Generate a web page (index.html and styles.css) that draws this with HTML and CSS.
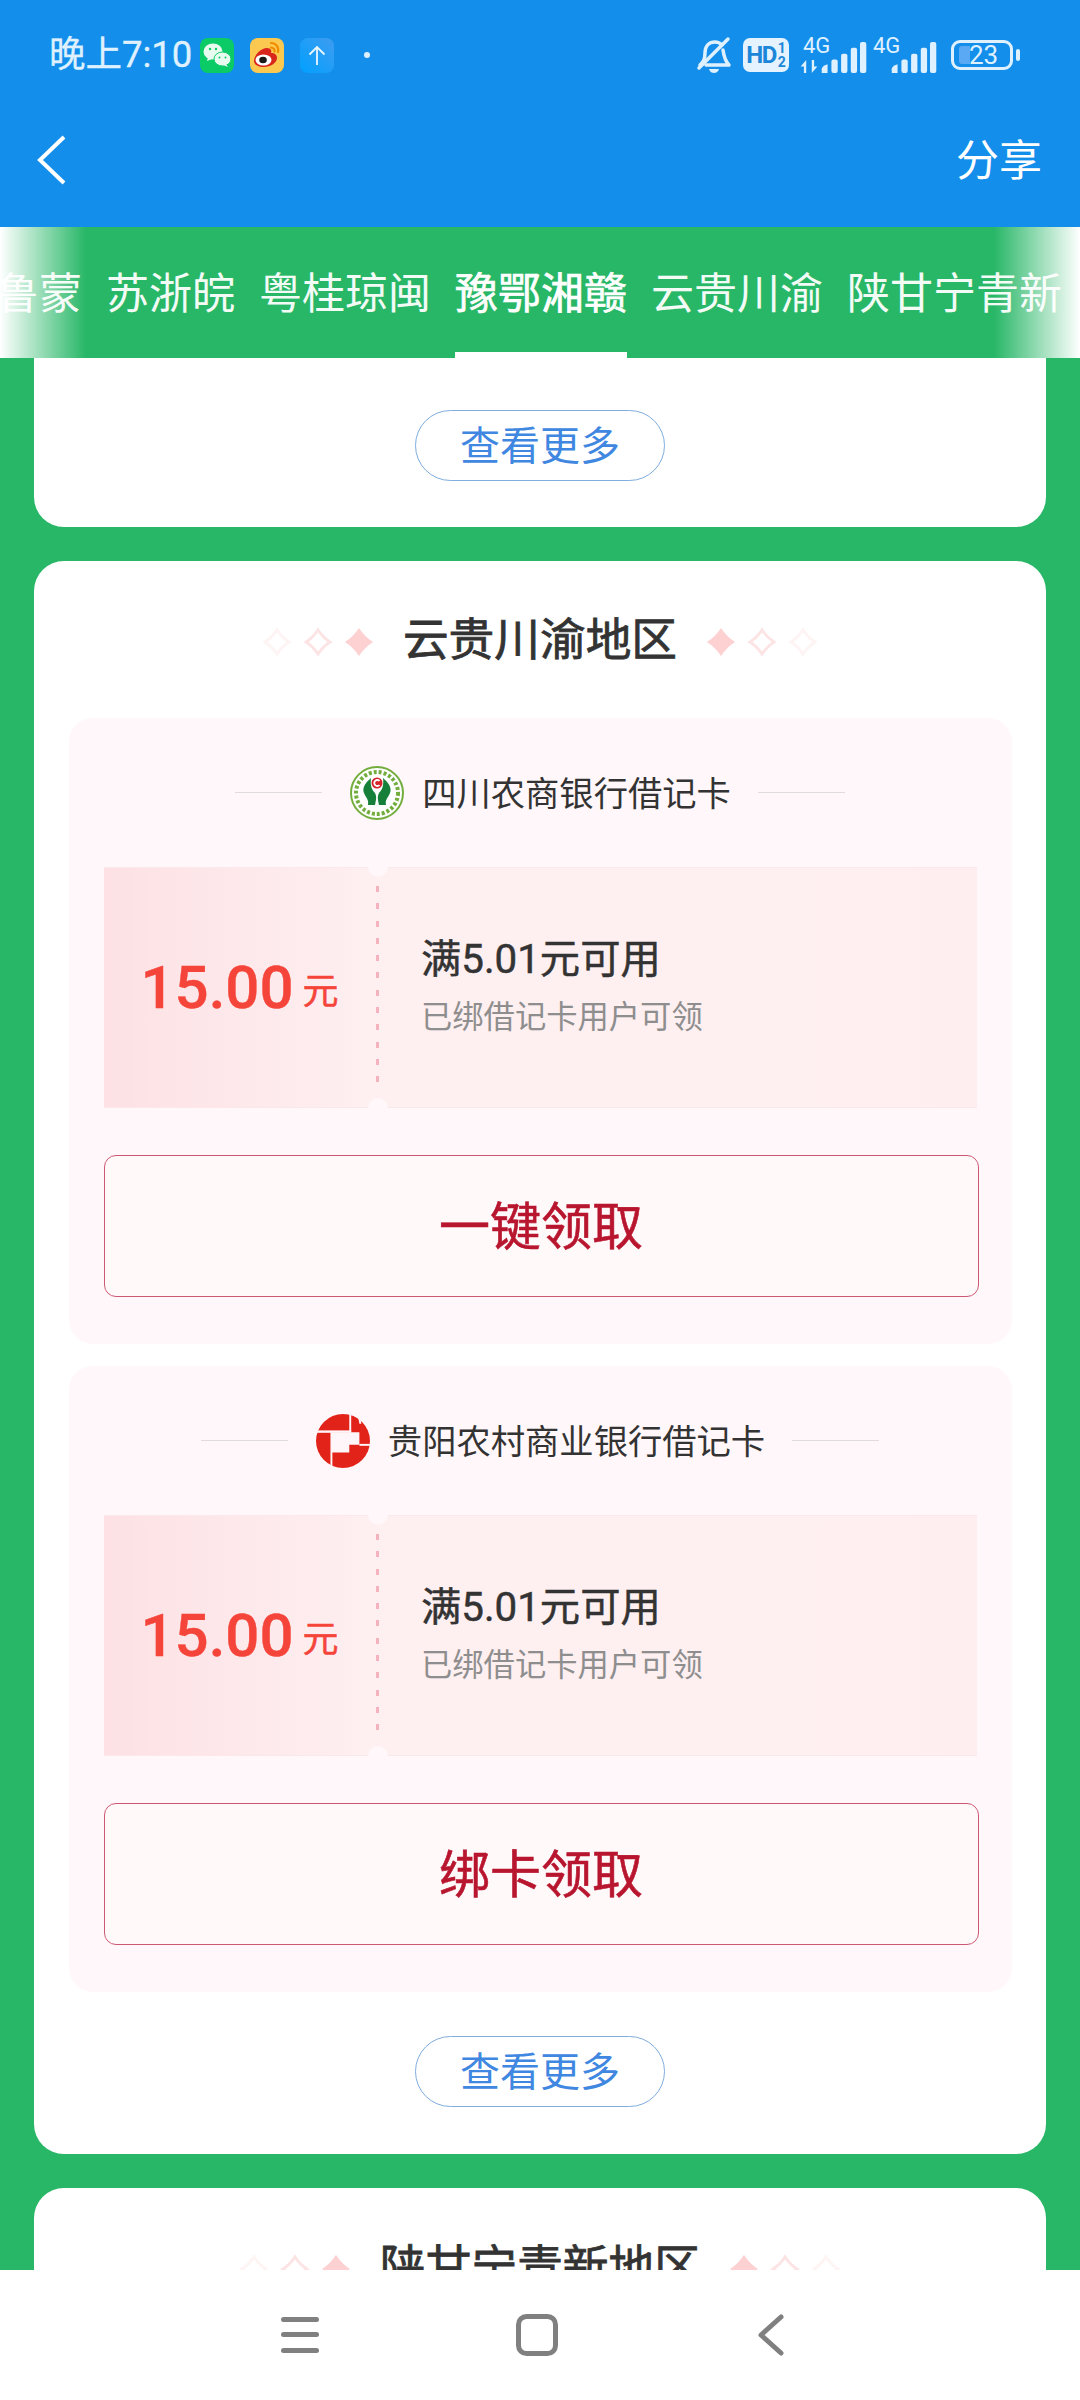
FILE: index.html
```html
<!DOCTYPE html>
<html lang="zh-CN">
<head>
<meta charset="utf-8">
<title>云贵川渝地区</title>
<link rel="stylesheet" href="styles.css">
</head>
<body>
<div class="app">
  <header class="top">
    <div class="status">
      <div class="status-left">
        <span class="time">晚上7:10</span>
        <svg class="app-icon" viewBox="0 0 34 35"><rect width="34" height="35" rx="8" fill="#0bcb66"/><ellipse cx="13" cy="13.500" rx="9.500" ry="8" fill="#e8fbef"/><path d="M8 19l-1 4 5-2z" fill="#e8fbef"/><ellipse cx="22.500" cy="21" rx="8.500" ry="7" fill="#e8fbef" stroke="#0bcb66"/><path d="M26 26l2 3-5-2z" fill="#e8fbef"/><circle cx="10" cy="11" r="1.200" fill="#0bcb66"/><circle cx="16" cy="11" r="1.200" fill="#0bcb66"/><circle cx="19.500" cy="19.500" r="1" fill="#0bcb66"/><circle cx="25.500" cy="19.500" r="1" fill="#0bcb66"/></svg>
        <svg class="app-icon" viewBox="0 0 34 35"><rect width="34" height="35" rx="8" fill="#fbc94f"/><path d="M4 23c0-6 7-13 13-13 4 0 5 3 4 5 4 0 6 2 6 5 0 5-7 9-13 9-5 0-10-2-10-6z" fill="#d9261c"/><ellipse cx="13.500" cy="22" rx="8" ry="5.500" fill="#fff"/><ellipse cx="13" cy="22" rx="3.800" ry="3.200" fill="#1a1a1a"/><path d="M21 5c5 0 8 4 7 9M21 9.500c2.500 0 4 2 3.500 4" fill="none" stroke="#f08c00" stroke-width="2.200" stroke-linecap="round"/></svg>
        <svg class="app-icon" viewBox="0 0 34 35"><defs><linearGradient id="up" x1="0" y1="1" x2="1" y2="0"><stop offset="0" stop-color="#00a0ff"/><stop offset="1" stop-color="#3f9cf0"/></linearGradient></defs><rect width="34" height="35" rx="8" fill="url(#up)"/><path d="M17 27V9M9.500 16.500L17 9l7.500 7.500" fill="none" stroke="#eaf7ff" stroke-width="1.800"/></svg>
        <span class="status-dot"></span>
      </div>
      <div class="status-right">
        <svg class="bell" viewBox="0 0 36 38"><path d="M4 29c3-3 5-5 5-12 0-7 4-11 10-11 3 0 5 1 7 3M27 14c1 7 2 11 6 15H10" fill="none" stroke="#dff1ff" stroke-width="3.500" stroke-linecap="round" stroke-linejoin="round"/><path d="M3 32L32 3" stroke="#dff1ff" stroke-width="3.500" stroke-linecap="round"/><path d="M13 33h10c-1 3-3 4-5 4s-4-1-5-4z" fill="#dff1ff"/></svg>
        <span class="hd"><span class="hd-main">HD</span><span class="hd-sub"><span>1</span><span>2</span></span></span>
        <span class="signal">
          <span class="net">4G</span>
          <svg class="arrows" viewBox="0 0 18 14"><path d="M6 0v14h-2.500V7H0zM12 14V0h2.500v7H18z" fill="#dff1ff"/></svg>
          <svg class="bars" viewBox="0 0 46 32"><g fill="#dff1ff"><path d="M0 32v-4q0-3 6-5v9z"/><rect x="10" y="18" width="6.500" height="14" rx="2"/><rect x="20" y="12" width="6.500" height="20" rx="2"/><rect x="30" y="6" width="6.500" height="26" rx="2"/><rect x="39.500" y="0" width="6.500" height="32" rx="2"/></g></svg>
        </span>
        <span class="signal signal-two">
          <span class="net">4G</span>
          <svg class="bars" viewBox="0 0 46 32"><g fill="#dff1ff"><path d="M0 32v-4q0-3 6-5v9z"/><rect x="10" y="18" width="6.500" height="14" rx="2"/><rect x="20" y="12" width="6.500" height="20" rx="2"/><rect x="30" y="6" width="6.500" height="26" rx="2"/><rect x="39.500" y="0" width="6.500" height="32" rx="2"/></g></svg>
        </span>
        <span class="battery"><span class="battery-body"><span class="battery-fill"></span><span class="battery-num">23</span></span><span class="battery-tip"></span></span>
      </div>
    </div>
    <nav class="navbar">
      <svg class="back" viewBox="0 0 30 50"><path d="M27 2L3 25l24 23" fill="none" stroke="#fff" stroke-width="4"/></svg>
      <span class="share">分享</span>
    </nav>
  </header>

  <div class="tabs">
    <div class="tab-row">
      <span class="tab">鲁蒙</span>
      <span class="tab">苏浙皖</span>
      <span class="tab">粤桂琼闽</span>
      <span class="tab tab-active">豫鄂湘赣</span>
      <span class="tab">云贵川渝</span>
      <span class="tab">陕甘宁青新</span>
    </div>
    <span class="fade fade-left"></span>
    <span class="fade fade-right"></span>
  </div>

  <main class="scroll">
    <section class="region region-cut">
      <button class="more">查看更多</button>
    </section>

    <section class="region region-full">
      <h2 class="region-title">
        <svg class="stars" viewBox="0 0 110 30"><use href="#star-line" x="0" opacity=".4"/><use href="#star-line" x="41"/><use href="#star-solid" x="82"/></svg>
        <span>云贵川渝地区</span>
        <svg class="stars" viewBox="0 0 110 30"><use href="#star-solid" x="0"/><use href="#star-line" x="41"/><use href="#star-line" x="82" opacity=".4"/></svg>
      </h2>

      <article class="bank-card">
        <div class="bank-head">
          <span class="rule"></span>
          <svg class="bank-logo" viewBox="0 0 54 54"><circle cx="27" cy="27" r="26" fill="#fff" stroke="#72ad3e" stroke-width="2"/><circle cx="27" cy="27" r="21" fill="none" stroke="#72ad3e" stroke-width="4" stroke-dasharray="3 2"/><circle cx="27" cy="27" r="18" fill="#fff"/><g fill="#16803a"><path d="M21 12C15 17 12 22 14 27C16 32 19 33 18 39L25 39C26 34 27 31 25 27C22 24 20 20 21 12Z"/><path d="M33 12C39 17 42 22 40 27C38 32 35 33 36 39L29 39C28 34 27 31 29 27C32 24 34 20 33 12Z"/></g><circle cx="27" cy="17" r="5.500" fill="#d6232a"/><path d="M29.500 15a3 3 0 1 0 0 4" fill="none" stroke="#fff" stroke-width="1.800"/></svg>
          <span class="bank-name">四川农商银行借记卡</span>
          <span class="rule"></span>
        </div>
        <div class="coupon">
          <div class="coupon-value"><span class="amount">15.00</span><span class="unit">元</span></div>
          <div class="coupon-info">
            <p class="condition">满5.01元可用</p>
            <p class="hint">已绑借记卡用户可领</p>
          </div>
        </div>
        <button class="claim">一键领取</button>
      </article>

      <article class="bank-card">
        <div class="bank-head">
          <span class="rule"></span>
          <svg class="bank-logo" viewBox="0 0 56 56"><circle cx="28" cy="28" r="28" fill="#e2231a"/><g fill="#fef6f8"><path d="M15 19H45V32H34.500V40H17V56H15Z"/><rect x="0" y="17" width="36.500" height="2.500"/><rect x="34.500" y="0" width="2" height="19"/><rect x="45" y="31" width="11" height="2"/><path d="M44 5l2-1 1 6-2 0z"/></g></svg>
          <span class="bank-name">贵阳农村商业银行借记卡</span>
          <span class="rule"></span>
        </div>
        <div class="coupon">
          <div class="coupon-value"><span class="amount">15.00</span><span class="unit">元</span></div>
          <div class="coupon-info">
            <p class="condition">满5.01元可用</p>
            <p class="hint">已绑借记卡用户可领</p>
          </div>
        </div>
        <button class="claim">绑卡领取</button>
      </article>

      <button class="more more-end">查看更多</button>
    </section>

    <section class="region region-next">
      <h2 class="region-title">
        <svg class="stars" viewBox="0 0 110 30"><use href="#star-line" x="0" opacity=".4"/><use href="#star-line" x="41"/><use href="#star-solid" x="82"/></svg>
        <span>陕甘宁青新地区</span>
        <svg class="stars" viewBox="0 0 110 30"><use href="#star-solid" x="0"/><use href="#star-line" x="41"/><use href="#star-line" x="82" opacity=".4"/></svg>
      </h2>
    </section>
  </main>

  <footer class="sysnav">
    <svg class="sys-menu" viewBox="0 0 38 38"><g fill="#808080"><rect y="1" width="38" height="5" rx="2.500"/><rect y="16" width="38" height="5" rx="2.500"/><rect y="32" width="38" height="5" rx="2.500"/></g></svg>
    <svg class="sys-home" viewBox="0 0 42 42"><rect x="2.500" y="2.500" width="37" height="37" rx="8" fill="none" stroke="#808080" stroke-width="5"/></svg>
    <svg class="sys-back" viewBox="0 0 27 42"><path d="M24 3L4 21l20 18" fill="none" stroke="#808080" stroke-width="5" stroke-linecap="round" stroke-linejoin="round"/></svg>
  </footer>
</div>
<svg class="defs" width="0" height="0"><defs>
  <path id="star-solid" d="M14 1Q19.500 9.500 28 15Q19.500 20.500 14 29Q8.500 20.500 0 15Q8.500 9.500 14 1Z" fill="#fdd0d1"/>
  <path id="star-line" d="M14 3Q19 10.500 26 15Q19 19.500 14 27Q9 19.500 2 15Q9 10.500 14 3Z" fill="none" stroke="#fce4e4" stroke-width="3"/>
</defs></svg>
</body>
</html>
```
FILE: styles.css
```css
* { box-sizing: border-box; }
html, body { margin: 0; padding: 0; }
body { font-family: "Noto Sans CJK SC", "Roboto", sans-serif; }
p, h2 { margin: 0; }
button { font: inherit; cursor: pointer; background: none; padding: 0; }
.defs { display: block; }

.app { width: 1080px; height: 2400px; display: flex; flex-direction: column; overflow: hidden; background: #28b767; }

.top { height: 227px; background: #138eeb; flex: none; }
.status { height: 108px; display: flex; justify-content: space-between; align-items: flex-start; padding: 37px 60px 0 49px; }
.status-left, .status-right { display: flex; align-items: center; height: 36px; }
.time { font-family: "Roboto", "Noto Sans CJK SC", sans-serif; font-size: 36.500px; line-height: 36px; color: #dff1ff; width: 151px; white-space: nowrap; -webkit-text-stroke: .3px #dff1ff; }
.app-icon { width: 34px; height: 35px; margin-right: 16px; flex: none; }
.status-dot { width: 6px; height: 6px; border-radius: 50%; background: #dff1ff; margin-left: 14px; }
.bell { width: 36px; height: 38px; margin-right: 11px; }
.hd { width: 46px; height: 34px; border-radius: 7px; background: #e4f3ff; color: #1c86d8; display: flex; align-items: center; justify-content: center; font-family: "Roboto", sans-serif; font-weight: 700; margin-right: 11px; }
.hd-main { font-size: 24px; letter-spacing: -1.500px; line-height: 1; }
.hd-sub { display: flex; flex-direction: column; font-size: 14px; line-height: 14px; margin-left: 2px; }
.signal { position: relative; width: 67px; height: 36px; margin-right: 6px; }
.signal-two { width: 64px; margin-right: 14px; }
.net { position: absolute; left: 3px; top: -2px; font-family: "Roboto", sans-serif; font-size: 22px; line-height: 22px; color: #dff1ff; }
.signal-two .net { left: 0; }
.arrows { position: absolute; left: 0; top: 23px; width: 18px; height: 13px; }
.bars { position: absolute; right: 0; bottom: 0; width: 46px; height: 31px; }
.battery { display: flex; align-items: center; }
.battery-body { position: relative; width: 62px; height: 30px; border: 3px solid #dff1ff; border-radius: 9px; display: block; }
.battery-fill { position: absolute; left: 5px; top: 3px; bottom: 3px; width: 11px; background: #5aa9f5; border-radius: 3px 0 0 3px; }
.battery-num { position: absolute; left: 15px; top: -2px; font-family: "Roboto", sans-serif; font-size: 26px; line-height: 28px; color: #dff1ff; }
.battery-tip { width: 4px; height: 12px; background: #dff1ff; border-radius: 2px; margin-left: 3px; }

.navbar { height: 119px; display: flex; justify-content: space-between; align-items: center; padding: 0 38px 16px 37px; }
.back { width: 30px; height: 50px; }
.share { font-size: 43px; line-height: 50px; color: #fff; margin-bottom: 6px; }

.tabs { position: relative; height: 131px; flex: none; background: #28b767; overflow: hidden; }
.tab-row { display: flex; gap: 24px; height: 131px; margin-left: -4px; white-space: nowrap; }
.tab { font-size: 43px; line-height: 1; color: #f2fbf6; padding-top: 42px; height: 131px; }
.tab-active { color: #fff; -webkit-text-stroke: .7px #fff; box-shadow: inset 0 -6px 0 #fff; }
.fade { position: absolute; top: 0; bottom: 0; width: 86px; }
.fade-left { left: 0; background: linear-gradient(to right, #fff, rgba(255, 255, 255, 0)); }
.fade-right { right: 0; background: linear-gradient(to left, #fff, rgba(255, 255, 255, 0)); }

.scroll { flex: 1; min-height: 0; overflow: hidden; padding: 0 34px; display: flex; flex-direction: column; gap: 34px; }
.region { background: #fff; border-radius: 30px; flex: none; display: flex; flex-direction: column; align-items: center; }
.region-cut { border-radius: 0 0 30px 30px; padding: 52px 0 46px; }
.region-full { padding-bottom: 47px; }
.region-next { min-height: 220px; }
.more { width: 250px; height: 71px; border: 1px solid #7fadde; border-radius: 36px; background: #fff; color: #3f87e0; font-size: 40px; line-height: 1; padding-bottom: 5px; flex: none; }
.more-end { margin-top: 22px; }

.region-title { height: 157px; width: 100%; display: flex; align-items: center; justify-content: center; gap: 30px; font-size: 45.700px; font-weight: 400; color: #333; line-height: 1; -webkit-text-stroke: .8px #333; padding-bottom: 5px; flex: none; }
.stars { width: 110px; height: 30px; margin-top: 9px; }

.bank-card { width: 943px; height: 626px; margin-bottom: 22px; background: #fff7f9; border-radius: 24px; padding: 0 35px; display: flex; flex-direction: column; flex: none; }
.bank-head { height: 149px; display: flex; align-items: center; justify-content: center; flex: none; }
.rule { width: 87px; height: 1px; background: #e0dcde; }
.bank-logo { width: 54px; height: 54px; margin: 0 18px 0 28px; flex: none; }
.bank-name { font-size: 34.300px; line-height: 1; color: #333; margin-right: 27px; white-space: nowrap; padding-bottom: 3px; }

.coupon { position: relative; width: 873px; height: 241px; display: flex; align-items: center; background: linear-gradient(to right, #fde1e4, #feeff1 30%, #feeff1 80%, #ffeef0); box-shadow: inset 0 1px 0 #fbe8ea, inset 0 -1px 0 #fbe8ea; flex: none; }
.coupon::before, .coupon::after { content: ""; position: absolute; left: 264px; width: 20px; height: 20px; border-radius: 50%; background: #fff7f9; }
.coupon::before { top: -10px; }
.coupon::after { bottom: -10px; }
.coupon-value { width: 275.500px; height: 204px; padding-left: 37px; display: flex; align-items: center; font-family: "Roboto", sans-serif; color: #f5453a; background: repeating-linear-gradient(to bottom, #f5b3bf 0, #f5b3bf 6px, rgba(245, 179, 191, 0) 6px, rgba(245, 179, 191, 0) 17.300px) right top / 3px 100% no-repeat; flex: none; }
.amount { font-size: 60px; font-weight: 500; line-height: 1; -webkit-text-stroke: .4px #f5453a; }
.unit { font-family: "Noto Sans CJK SC", sans-serif; font-size: 36px; line-height: 1; margin-left: 9px; -webkit-text-stroke: .5px #f5453a; }
.coupon-info { margin-left: 42px; display: flex; flex-direction: column; padding-bottom: 6px; }
.condition { font-size: 40.300px; font-weight: 400; font-family: "Roboto", "Noto Sans CJK SC", sans-serif; color: #333; line-height: 52px; -webkit-text-stroke: .5px #333; }
.hint { font-size: 31.300px; color: #8e8e8e; line-height: 40px; margin-top: 9px; }

.claim { width: 875px; height: 142px; margin-top: 47px; border: 1px solid #cc5874; border-radius: 12px; background: #fff9fa; color: #b8162f; font-size: 51px; font-weight: 400; line-height: 1; -webkit-text-stroke: .6px #b8162f; padding-bottom: 5px; flex: none; }

.sysnav { height: 130px; flex: none; background: #fff; position: relative; display: flex; align-items: center; padding: 0 296px 0 281px; justify-content: space-between; }
.sys-menu { width: 38px; height: 38px; margin-top: -1px; }
.sys-home { width: 42px; height: 42px; margin-right: 3px; }
.sys-back { width: 27px; height: 42px; }
```
